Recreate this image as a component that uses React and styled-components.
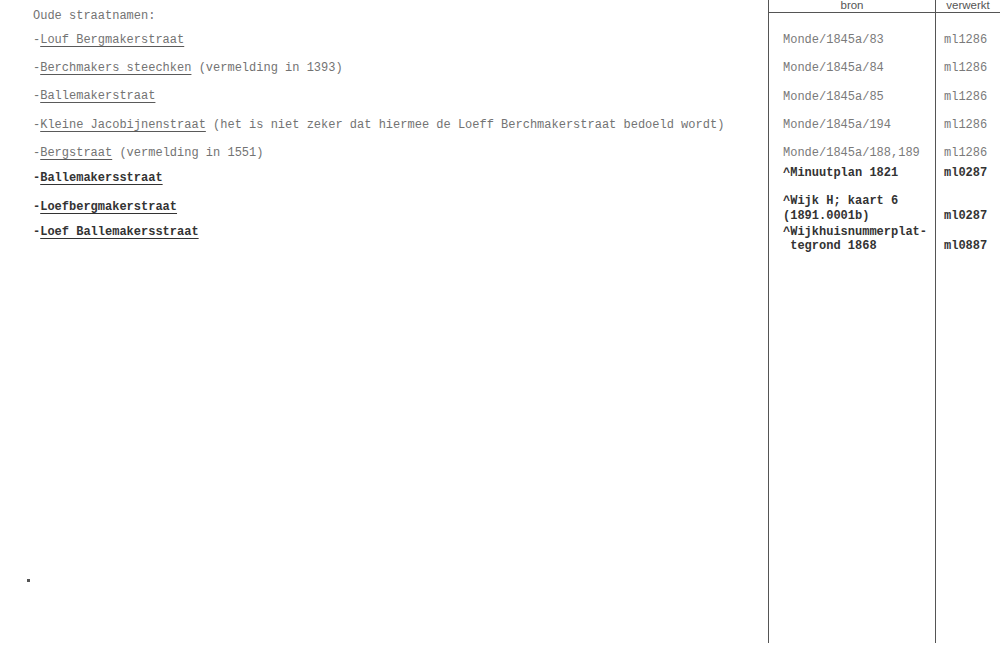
import React from 'react'
import styled, { createGlobalStyle } from 'styled-components'

const Global = createGlobalStyle`
    html, body {
        margin: 0;
        padding: 0;
        background: #fff;
    }
`

const Page = styled.div`
    display: flex;
    width: 1000px;
    height: 649px;
    overflow: hidden;
    font-family: "Liberation Mono", "DejaVu Sans Mono", monospace;
    font-size: 12px;
`

const Notes = styled.div`
    width: 768px;
    flex: none;
    display: flex;
    flex-direction: column;
    padding: 9px 0 0 33px;
    box-sizing: border-box;
`

const Line = styled.div`
    height: 14px;
    line-height: 14px;
    margin-top: ${p => p.$gap || 0}px;
    white-space: pre;
    color: ${p => p.$bold ? '#333' : '#737373'};
    font-weight: ${p => p.$bold ? 700 : 400};
`

const Name = styled.span`
    text-decoration: underline;
    text-decoration-thickness: 1px;
    text-underline-offset: 3px;
    text-decoration-color: ${p => p.$bold ? '#333' : '#5a5a5a'};
`

const Speck = styled.div`
    width: 3px;
    height: 3px;
    margin: 340px 0 0 -6px;
    background: #555;
`

const Table = styled.div`
    flex: none;
    width: 232px;
    height: 643px;
    display: grid;
    grid-template-columns: 167px 65px;
    grid-template-rows: 13px 1fr;
`

const Head = styled.div`
    border-left: 1px solid #555;
    border-bottom: 1px solid #555;
    box-sizing: border-box;
    text-align: center;
    font-family: "Liberation Sans", Arial, sans-serif;
    font-size: 11.5px;
    line-height: 11px;
    color: #555;
`

const Cell = styled.div`
    border-left: 1px solid #555;
    display: flex;
    flex-direction: column;
    padding-left: ${p => p.$pad}px;
`

const Entry = styled.div`
    line-height: ${p => p.$lh || 14}px;
    margin-top: ${p => p.$gap || 0}px;
    white-space: pre;
    color: ${p => p.$bold ? '#333' : '#7a7a7a'};
    font-weight: ${p => p.$bold ? 700 : 400};
`

const notes = [
    { gap: 0, plain: 'Oude straatnamen:' },
    { gap: 10, name: 'Louf Bergmakerstraat' },
    { gap: 14, name: 'Berchmakers steechken', rest: ' (vermelding in 1393)' },
    { gap: 14, name: 'Ballemakerstraat' },
    { gap: 15, name: 'Kleine Jacobijnenstraat', rest: ' (het is niet zeker dat hiermee de Loeff Berchmakerstraat bedoeld wordt)' },
    { gap: 14, name: 'Bergstraat', rest: ' (vermelding in 1551)' },
    { gap: 11, name: 'Ballemakersstraat', bold: true },
    { gap: 15, name: 'Loefbergmakerstraat', bold: true },
    { gap: 11, name: 'Loef Ballemakersstraat', bold: true },
]

const sources = [
    { gap: 20, text: 'Monde/1845a/83' },
    { gap: 14, text: 'Monde/1845a/84' },
    { gap: 15, text: 'Monde/1845a/85' },
    { gap: 14, text: 'Monde/1845a/194' },
    { gap: 14, text: 'Monde/1845a/188,189' },
    { gap: 6, text: '^Minuutplan 1821', bold: true },
    { gap: 14, lh: 15, text: '^Wijk H; kaart 6\n(1891.0001b)', bold: true },
    { gap: 1, text: '^Wijkhuisnummerplat-\n tegrond 1868', bold: true },
]

const processed = [
    { gap: 20, text: 'ml1286' },
    { gap: 14, text: 'ml1286' },
    { gap: 15, text: 'ml1286' },
    { gap: 14, text: 'ml1286' },
    { gap: 14, text: 'ml1286' },
    { gap: 6, text: 'ml0287', bold: true },
    { gap: 29, text: 'ml0287', bold: true },
    { gap: 16, text: 'ml0887', bold: true },
]

const App = () => (
    <>
        <Global />
        <Page>
            <Notes>
                {notes.map((n, i) =>
                    <Line key={i} $gap={n.gap} $bold={n.bold}>
                        {n.plain ?? <>-<Name $bold={n.bold}>{n.name}</Name>{n.rest}</>}
                    </Line>)
                }
                <Speck />
            </Notes>
            <Table>
                <Head>bron</Head>
                <Head>verwerkt</Head>
                <Cell $pad={14}>
                    {sources.map((s, i) =>
                        <Entry key={i} $gap={s.gap} $lh={s.lh} $bold={s.bold}>{s.text}</Entry>)
                    }
                </Cell>
                <Cell $pad={8}>
                    {processed.map((s, i) =>
                        <Entry key={i} $gap={s.gap} $bold={s.bold}>{s.text}</Entry>)
                    }
                </Cell>
            </Table>
        </Page>
    </>
)

export default App
